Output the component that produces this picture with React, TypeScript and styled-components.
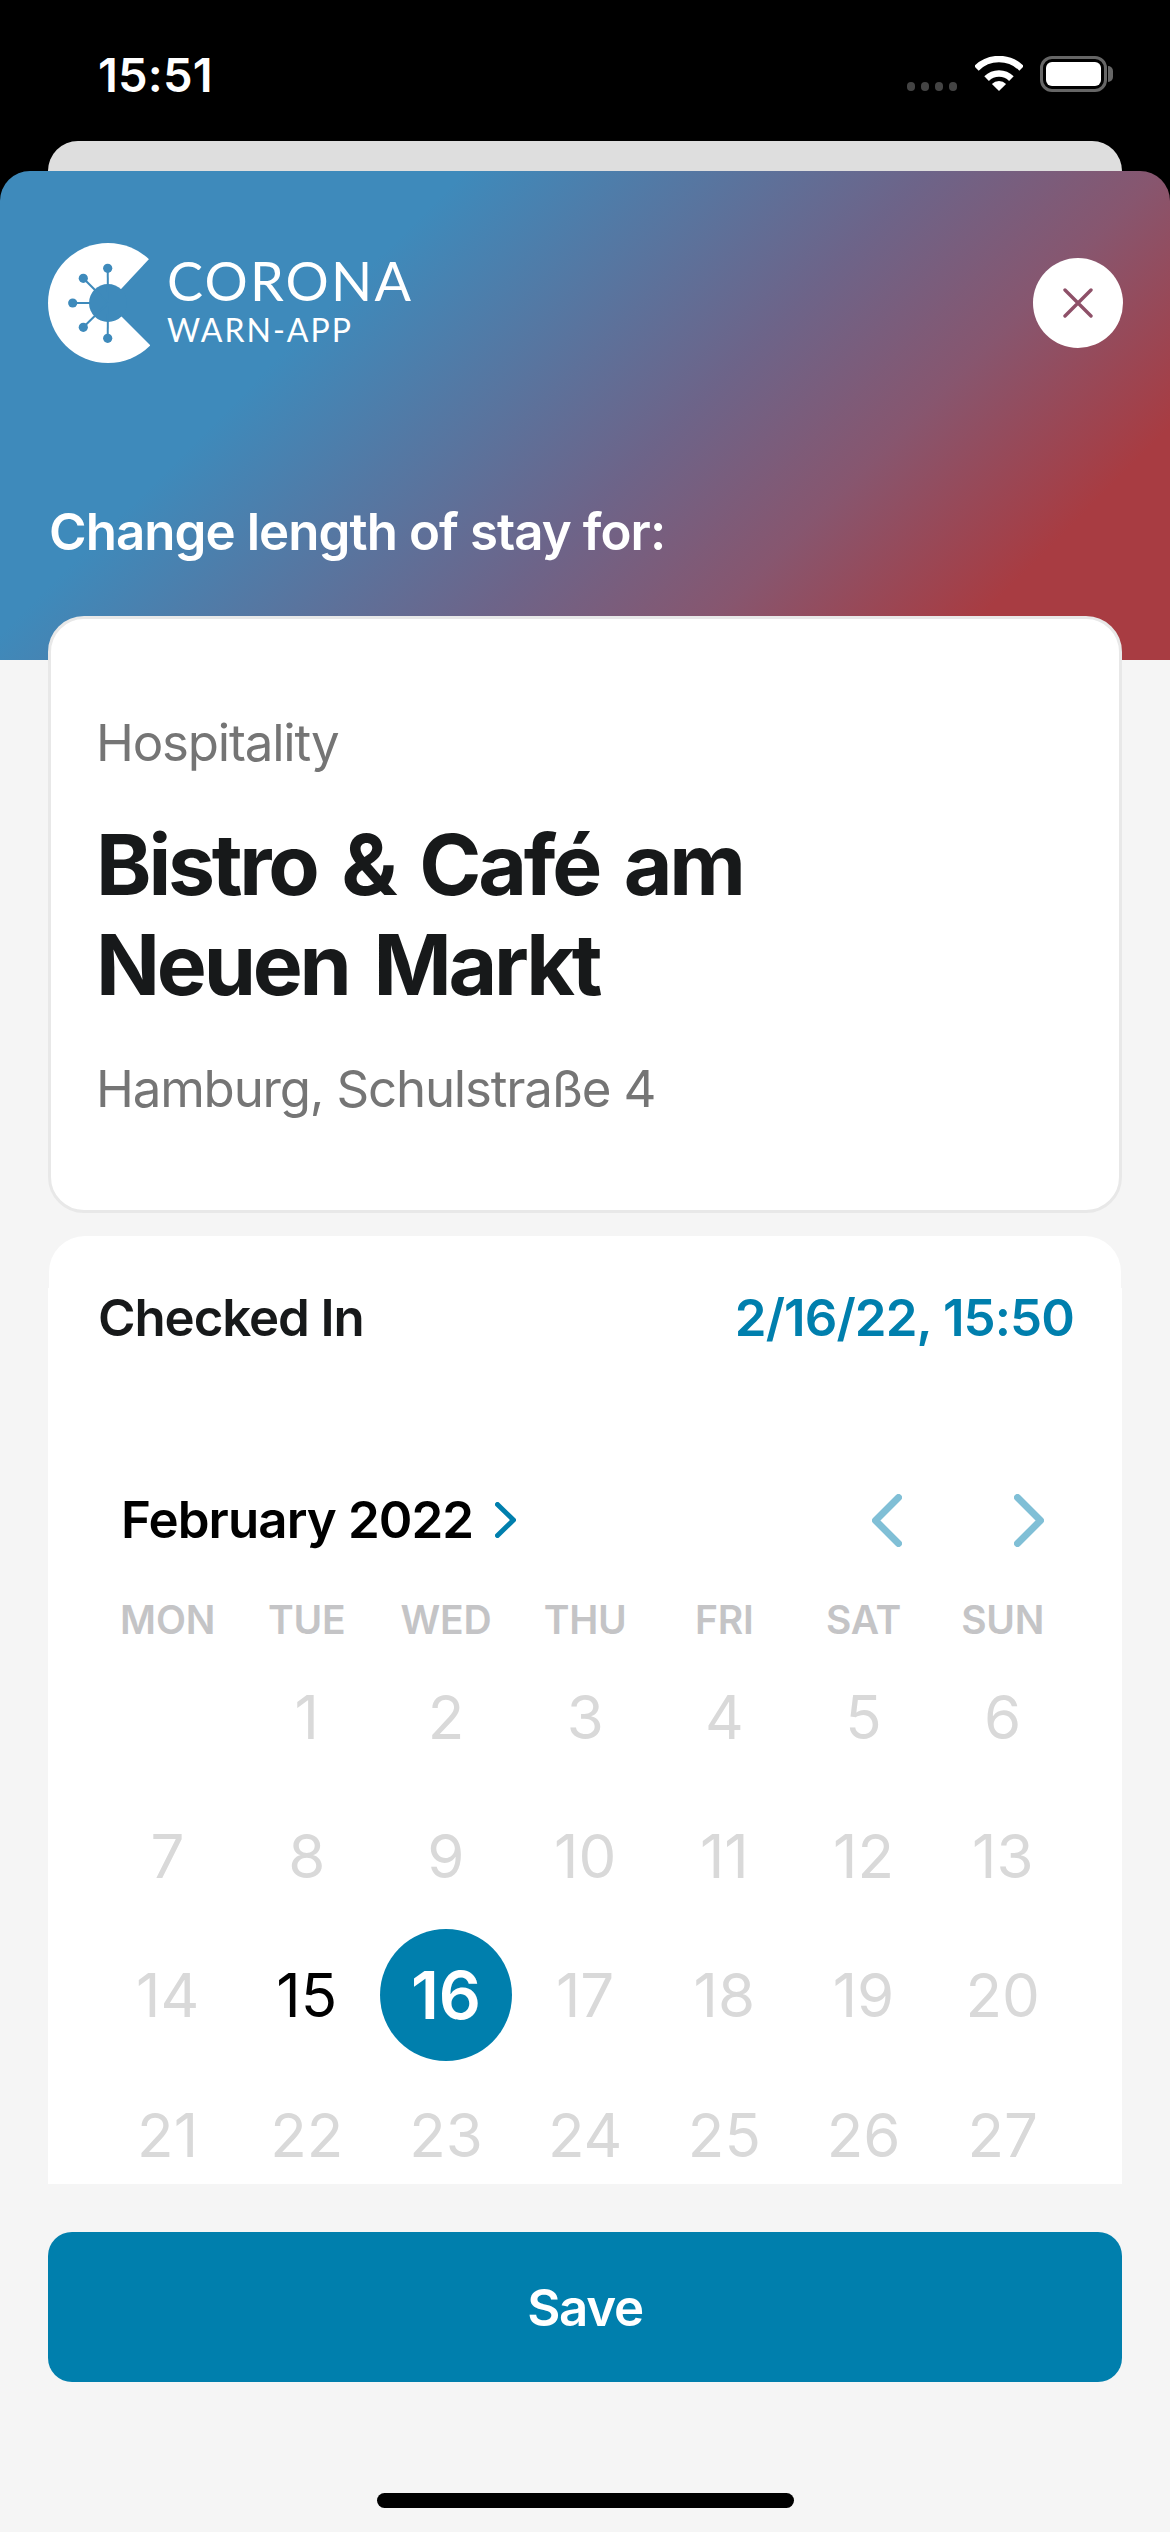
import React from "react";
import styled, { createGlobalStyle } from "styled-components";

const Global = createGlobalStyle`
  html, body { margin: 0; padding: 0; background: #f5f5f5; }
  * { box-sizing: border-box; }
  body { font-family: Inter, "Noto Sans", sans-serif; }
`;

const Screen = styled.div`
  width: 1170px;
  height: 2532px;
  background: #f5f5f5;
  display: flex;
  flex-direction: column;
  overflow: hidden;
`;

const TopArea = styled.div`
  background: #000;
`;

const StatusBar = styled.div`
  height: 141px;
  display: flex;
  align-items: flex-start;
  justify-content: space-between;
  padding: 47px 63px 0 98px;
`;

const Clock = styled.span`
  color: #fff;
  font-size: 47px;
  line-height: 56px;
  font-weight: 600;
  letter-spacing: 0.2px;
`;

const StatusIcons = styled.div`
  display: flex;
  align-items: flex-start;
  padding-top: 9px;
`;

const Signal = styled.div`
  display: flex;
  gap: 5.5px;
  margin: 26px 18px 0 0;
`;

const SignalDot = styled.i`
  width: 8.5px;
  height: 9px;
  border-radius: 4px;
  background: #444;
`;

const WifiIcon = styled.svg`
  width: 48px;
  height: 35px;
  margin-right: 17px;
`;

const Battery = styled.div`
  width: 67px;
  height: 36px;
  border: 3px solid #666;
  border-radius: 12px;
  padding: 3px;
  position: relative;
`;

const BatteryFill = styled.div`
  width: 100%;
  height: 100%;
  background: #fff;
  border-radius: 6px;
`;

const BatteryNub = styled.i`
  position: absolute;
  left: 65px;
  top: 7px;
  width: 5px;
  height: 16px;
  background: #666;
  border-radius: 0 5px 5px 0;
`;

const BehindSheet = styled.div`
  height: 30px;
  margin: 0 48px;
  background: #dedede;
  border-radius: 30px 30px 0 0;
`;

const Header = styled.header`
  height: 489px;
  padding: 72px 48px 0 49px;
  border-radius: 30px 30px 0 0;
  background: linear-gradient(135deg, #3e8abb 28%, #6d6489 56%, #87566f 70%, #a83c42 86%);
`;

const HeaderRow = styled.div`
  height: 120px;
  display: flex;
  align-items: center;
  justify-content: space-between;
`;

const Logo = styled.div`
  display: flex;
  align-items: flex-start;
  gap: 17px;
  margin-left: -1px;
`;

const LogoMark = styled.svg`
  width: 102px;
  height: 120px;
`;

const Wordmark = styled.div`
  display: flex;
  flex-direction: column;
  color: #fff;
  font-family: Lato, sans-serif;
  padding-top: 9px;
`;

const WordTop = styled.span`
  font-size: 54px;
  line-height: 58px;
  font-weight: 400;
  letter-spacing: 2.2px;
`;

const WordBottom = styled.span`
  font-size: 32px;
  line-height: 32px;
  font-weight: 400;
  letter-spacing: 2px;
  margin: 4px 0 0 0;
`;

const CloseButton = styled.button`
  width: 90px;
  height: 90px;
  border: 0;
  padding: 0;
  border-radius: 50%;
  background: #fff;
  display: flex;
  align-items: center;
  justify-content: center;
  margin-right: -1px;
`;

const HeaderTitle = styled.div`
  margin-top: 139px;
  color: #fff;
  font-size: 51px;
  line-height: 60px;
  font-weight: 600;
  letter-spacing: -0.93px;
`;

const VenueCard = styled.section`
  position: relative;
  margin: -44px 48px 0;
  height: 597px;
  padding: 94px 45px 0;
  background: #fff;
  border: 3px solid #e8e8e8;
  border-radius: 36px;
`;

const VenueMeta = styled.div`
  color: #757575;
  font-size: 51px;
  line-height: 60px;
  letter-spacing: -1.2px;
`;

const VenueName = styled.h1`
  margin: 42px 0 44px;
  color: #17191a;
  font-size: 84px;
  line-height: 100px;
  font-weight: 700;
  letter-spacing: -3.2px;
  word-spacing: 8px;
`;

const StayCard = styled.section`
  margin: 23px 48px 0;
  height: 948px;
  overflow: hidden;
`;

const CardCap = styled.div`
  height: 52px;
  margin: 0 1px;
  background: #fff;
  border-radius: 36px 36px 0 0;
`;

const CardBody = styled.div`
  height: 896px;
  background: #fff;
`;

const CheckRow = styled.div`
  display: flex;
  justify-content: space-between;
  padding: 0 48px 0 50px;
  font-size: 51px;
  line-height: 60px;
  font-weight: 600;
`;

const CheckLabel = styled.span`
  color: #17191a;
  letter-spacing: -1.1px;
`;

const CheckValue = styled.span`
  color: #007fad;
  letter-spacing: -0.9px;
`;

const MonthRow = styled.div`
  margin-top: 142px;
  height: 60px;
  padding: 0 78px 0 73px;
  display: flex;
  align-items: center;
`;

const MonthTitle = styled.span`
  color: #000;
  font-size: 51px;
  line-height: 60px;
  font-weight: 600;
  letter-spacing: -0.9px;
  margin-right: 22px;
`;

const MonthNav = styled.div`
  margin-left: auto;
  display: flex;
  gap: 112px;
`;

const Weekdays = styled.div`
  margin-top: 45px;
  display: grid;
  grid-template-columns: repeat(7, 139.2px);
  padding-left: 50px;
`;

const Weekday = styled.span`
  text-align: center;
  color: #c4c4c6;
  font-size: 39px;
  line-height: 50px;
  font-weight: 600;
  letter-spacing: -0.2px;
`;

const DayGrid = styled.div`
  margin-top: 2px;
  display: grid;
  grid-template-columns: repeat(7, 139.2px);
  grid-auto-rows: 139.3px;
  padding-left: 50px;
`;

const Day = styled.div<{ $active?: boolean }>`
  display: flex;
  align-items: center;
  justify-content: center;
  font-size: 60px;
  font-weight: 400;
  color: ${(p) => (p.$active ? "#000" : "#d9d9d9")};
`;

const SelectedDay = styled.div`
  width: 132px;
  height: 132px;
  border-radius: 50%;
  background: #007fad;
  color: #fff;
  display: flex;
  align-items: center;
  justify-content: center;
  font-size: 66px;
  font-weight: 600;
`;

const SaveButton = styled.button`
  margin: 48px 48px 0;
  height: 150px;
  border: 0;
  border-radius: 24px;
  background: #007fad;
  color: #fff;
  font-family: Inter, sans-serif;
  font-size: 51px;
  font-weight: 600;
  letter-spacing: -1.3px;
`;

const HomeIndicator = styled.div`
  margin: 111px auto 0;
  width: 417px;
  height: 15px;
  border-radius: 8px;
  background: #000;
`;

const MARK = "#3e8abb";
const WEEK = ["MON", "TUE", "WED", "THU", "FRI", "SAT", "SUN"];
const spikes: [number, number][] = [
  [59.7, 25.3],
  [35.3, 35.3],
  [24.7, 60],
  [35.3, 84.3],
  [59.7, 95.3],
];

const Chevron = ({ dir, color, w, h, sw }: { dir: "l" | "r"; color: string; w: number; h: number; sw: number }) => (
  <svg width={w} height={h} viewBox={`0 0 ${w} ${h}`} fill="none">
    <polyline
      points={
        dir === "l"
          ? `${w - sw / 2},${sw / 2} ${sw / 2},${h / 2} ${w - sw / 2},${h - sw / 2}`
          : `${sw / 2},${sw / 2} ${w - sw / 2},${h / 2} ${sw / 2},${h - sw / 2}`
      }
      stroke={color}
      strokeWidth={sw}
      strokeLinecap="round"
      strokeLinejoin="round"
    />
  </svg>
);

export default function App() {
  const days: (number | null)[] = [null];
  for (let d = 1; d <= 27; d++) days.push(d);
  return (
    <Screen>
      <Global />
      <TopArea>
        <StatusBar>
          <Clock>15:51</Clock>
          <StatusIcons>
            <Signal>
              <SignalDot />
              <SignalDot />
              <SignalDot />
              <SignalDot />
            </Signal>
            <WifiIcon viewBox="0 0 48 35" fill="none">
              <path d="M1.4 12.4A32 32 0 0 1 46.6 12.4" stroke="#fff" strokeWidth="6.5" />
              <path d="M11.6 22.6A17.5 17.5 0 0 1 36.4 22.6" stroke="#fff" strokeWidth="6.5" />
              <path d="M24 35L16.9 27.9A10 10 0 0 1 31.1 27.9Z" fill="#fff" />
            </WifiIcon>
            <Battery>
              <BatteryFill />
              <BatteryNub />
            </Battery>
          </StatusIcons>
        </StatusBar>
        <BehindSheet />
        <Header>
          <HeaderRow>
            <Logo>
              <LogoMark viewBox="0 0 102 120">
                <circle cx="60" cy="60" r="60" fill="#fff" />
                <path d="M60 60L102 15L120 15L120 105L102 102Z" fill={MARK} />
                <circle cx="60" cy="60" r="19" fill={MARK} />
                {spikes.map(([x, y]) => (
                  <g key={`${x}-${y}`}>
                    <line x1="60" y1="60" x2={x} y2={y} stroke={MARK} strokeWidth="2" />
                    <circle cx={x} cy={y} r="4.6" fill={MARK} />
                  </g>
                ))}
              </LogoMark>
              <Wordmark>
                <WordTop>CORONA</WordTop>
                <WordBottom>WARN-APP</WordBottom>
              </Wordmark>
            </Logo>
            <CloseButton aria-label="Close">
              <svg width="30" height="30" viewBox="0 0 30 30" fill="none">
                <path d="M2 2L28 28M28 2L2 28" stroke="#8e5068" strokeWidth="3.4" strokeLinecap="round" />
              </svg>
            </CloseButton>
          </HeaderRow>
          <HeaderTitle>Change length of stay for:</HeaderTitle>
        </Header>
      </TopArea>
      <VenueCard>
        <VenueMeta>Hospitality</VenueMeta>
        <VenueName>
          Bistro &amp; Café am
          <br />
          Neuen Markt
        </VenueName>
        <VenueMeta>Hamburg, Schulstraße 4</VenueMeta>
      </VenueCard>
      <StayCard>
        <CardCap />
        <CardBody>
          <CheckRow>
            <CheckLabel>Checked In</CheckLabel>
            <CheckValue>2/16/22, 15:50</CheckValue>
          </CheckRow>
          <MonthRow>
            <MonthTitle>February 2022</MonthTitle>
            <Chevron dir="r" color="#007fad" w={21} h={36} sw={5} />
            <MonthNav>
              <Chevron dir="l" color="#80bfd6" w={30} h={53} sw={7} />
              <Chevron dir="r" color="#80bfd6" w={30} h={53} sw={7} />
            </MonthNav>
          </MonthRow>
          <Weekdays>
            {WEEK.map((d) => (
              <Weekday key={d}>{d}</Weekday>
            ))}
          </Weekdays>
          <DayGrid>
            {days.map((d, i) => (
              <Day key={i} $active={d === 15}>
                {d === 16 ? <SelectedDay>16</SelectedDay> : d}
              </Day>
            ))}
          </DayGrid>
        </CardBody>
      </StayCard>
      <SaveButton>Save</SaveButton>
      <HomeIndicator />
    </Screen>
  );
}
